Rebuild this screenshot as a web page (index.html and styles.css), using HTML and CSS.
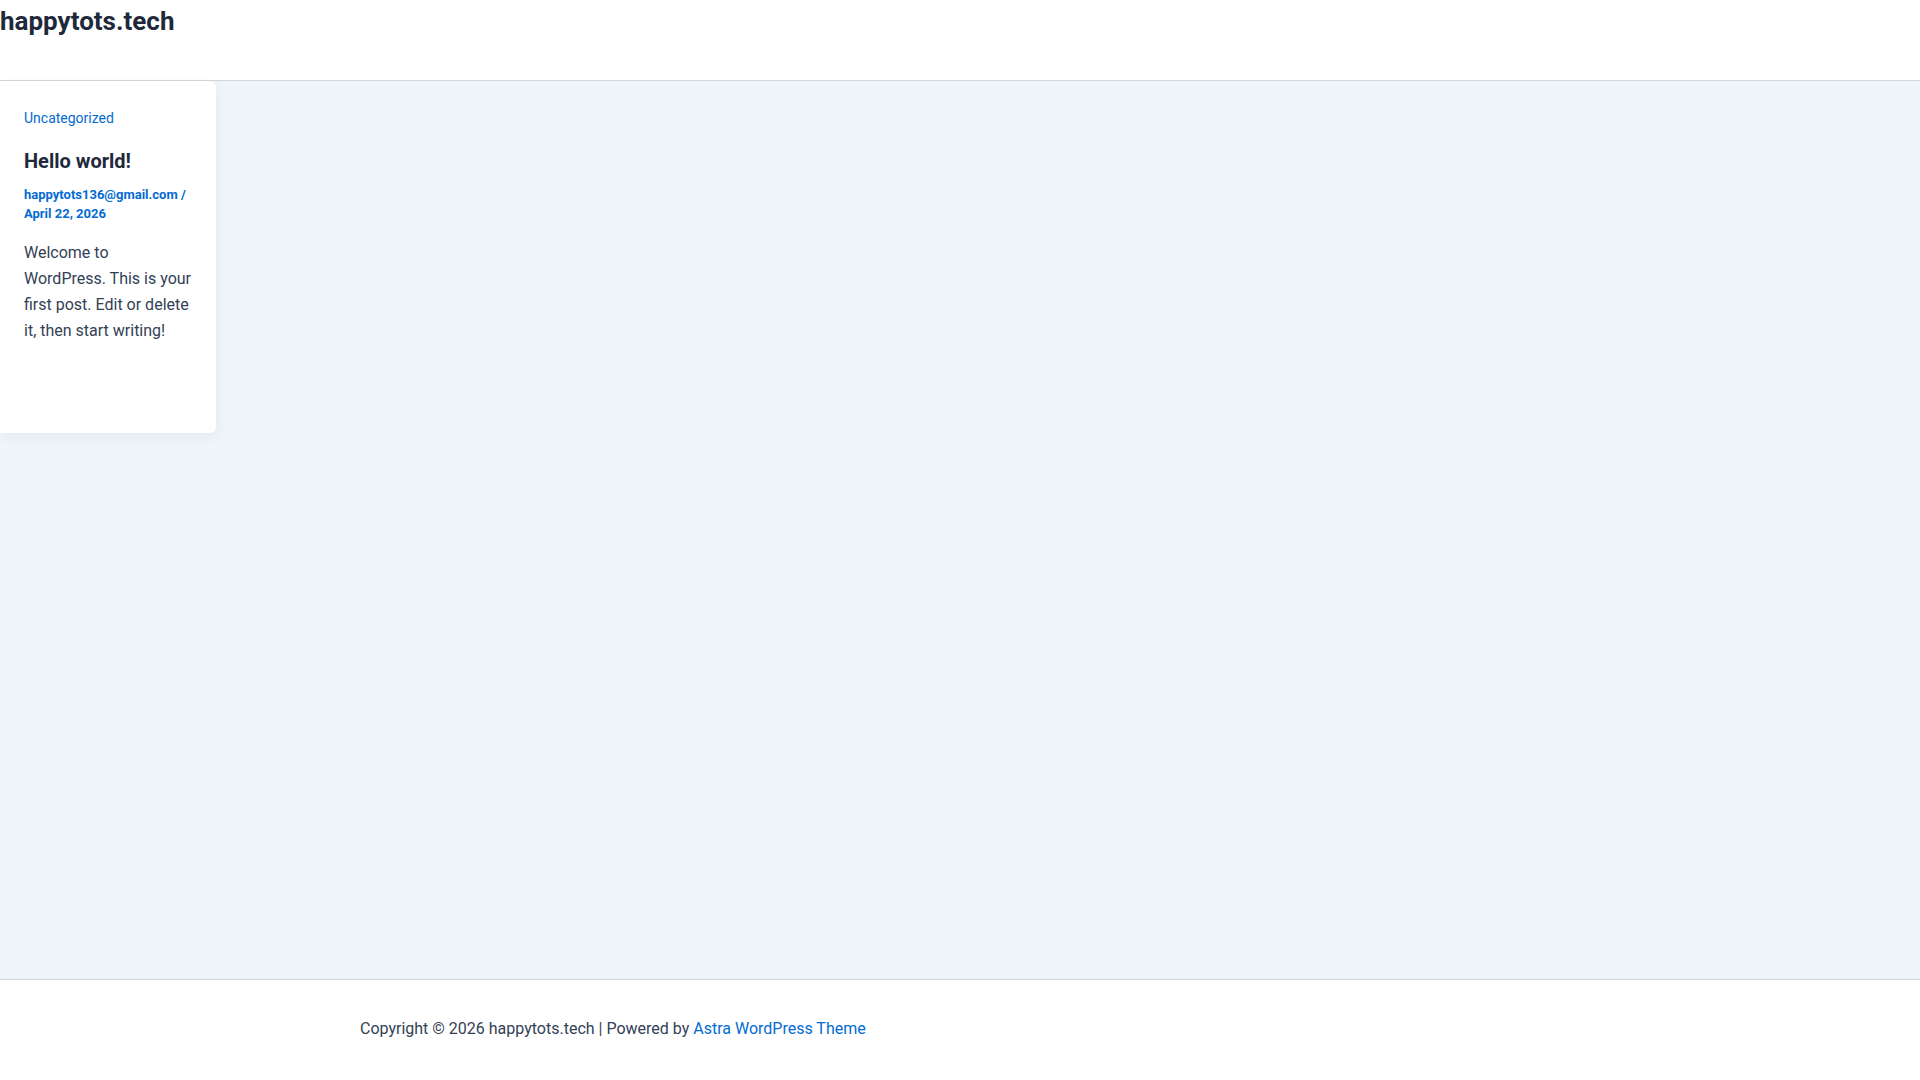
FILE: index.html
```html
<!DOCTYPE html>
<html>
<head>
  <meta charset="UTF-8">
  <link rel="stylesheet" href="styles.css">
  <title>happytots.tech</title>
</head>
<body>
  <div class="page">
    <header class="site-header">
      <p class="site-title">happytots.tech</p>
    </header>

    <main class="site-main">
      <article class="post-card">
        <a class="post-cat" href="#">Uncategorized</a>
        <h2 class="post-title">Hello world!</h2>
        <div class="post-meta">
          <a href="#">happytots136@gmail.com</a> /<br>
          <span>April 22, 2026</span>
        </div>
        <p class="post-excerpt">Welcome to WordPress. This is your first post. Edit or delete it, then start writing!</p>
      </article>
    </main>

    <footer class="site-footer">
      <div class="footer-inner">
        Copyright &copy; 2026 happytots.tech | Powered by <a href="#">Astra WordPress Theme</a>
      </div>
    </footer>
  </div>
</body>
</html>
```

FILE: styles.css
```css
  body {
    margin: 0;
    font-family: Roboto, "Liberation Sans", sans-serif;
    color: #334155;
    background: #ffffff;
  }

  a {
    color: #046bd2;
    text-decoration: none;
  }

  .page {
    display: flex;
    flex-direction: column;
    min-height: 100vh;
  }

  .site-header {
    height: 80px;
    border-bottom: 1px solid #d1d5db;
    background: #ffffff;
  }

  .site-title {
    margin: 0;
    padding-top: 3px;
    font-size: 26px;
    font-weight: 700;
    line-height: 36px;
    color: #1e293b;
  }

  .site-main {
    flex: 1;
    background: #f0f5fa;
    display: flex;
    align-items: flex-start;
  }

  .post-card {
    width: 168px;
    padding: 25px 24px 89px;
    background: #ffffff;
    border-radius: 0 6px 6px 0;
    box-shadow: 0 4px 14px rgba(30, 41, 59, 0.06);
  }

  .post-cat {
    display: block;
    font-size: 14px;
    line-height: 20px;
    margin-top: 2px;
  }

  .post-title {
    margin: 19px 0 0;
    font-size: 20px;
    font-weight: 700;
    line-height: 28px;
    color: #1e293b;
  }

  .post-meta {
    margin-top: 10px;
    font-size: 13px;
    font-weight: 700;
    line-height: 19px;
    color: #046bd2;
  }

  .post-excerpt {
    margin: 17px 0 0;
    font-size: 16px;
    line-height: 26px;
    color: #334155;
  }

  .site-footer {
    height: 100px;
    border-top: 1px solid #d1d5db;
    background: #ffffff;
  }

  .footer-inner {
    max-width: 1200px;
    margin: 0 auto;
    padding-top: 36px;
    font-size: 16px;
    line-height: 26px;
    color: #334155;
  }
```
